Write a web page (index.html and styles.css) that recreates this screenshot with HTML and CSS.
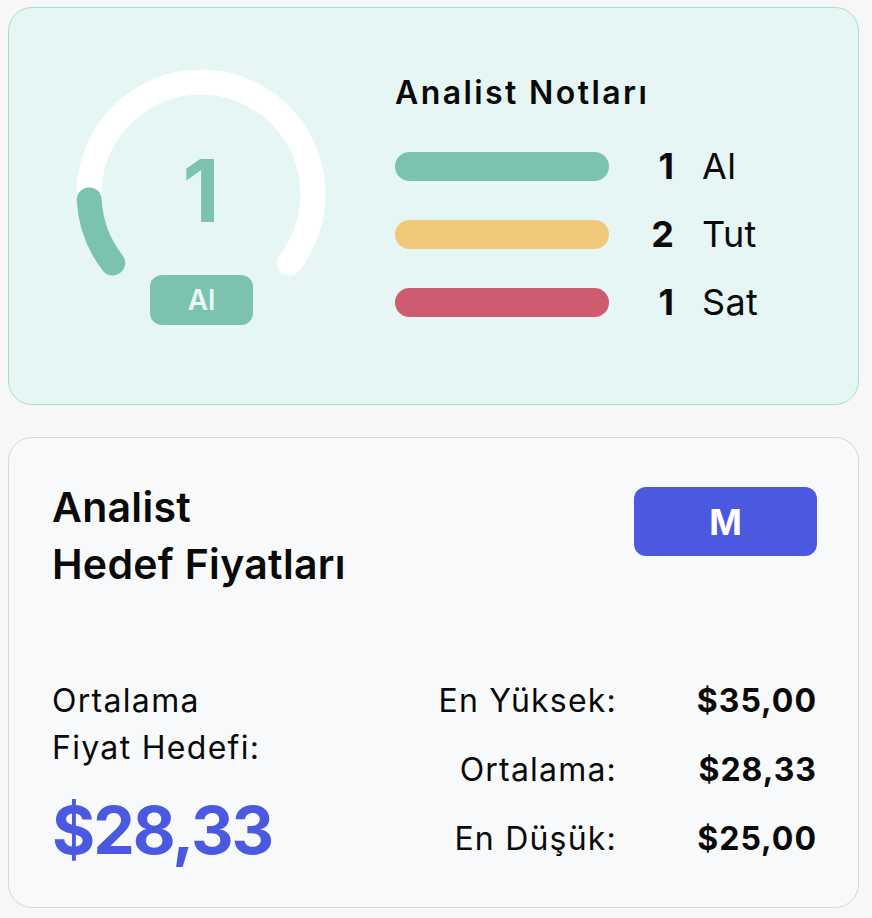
FILE: index.html
```html
<!DOCTYPE html>
<html lang="tr">
    <head>
        <meta charset="UTF-8" />
        <meta name="viewport" content="width=device-width, initial-scale=1.0" />
        <title>Analist Notları</title>
        <link rel="stylesheet" href="styles.css">
    </head>
    <body>
        <div id="contenedor">
            <section class="tarjeta notas">
                <div class="gauge">
                    <svg width="262" height="262" viewBox="0 0 262 262">
                        <path d="M 42.7 200 A 112 112 0 1 1 219.3 200" fill="none" stroke="#ffffff" stroke-width="25" stroke-linecap="round" />
                        <path d="M 42.7 200 A 112 112 0 0 1 19.2 136.9" fill="none" stroke="#7bc3ae" stroke-width="25" stroke-linecap="round" />
                    </svg>
                    <div class="gaugeNumero">1</div>
                    <div class="gaugeEtiqueta">Al</div>
                </div>
                <div class="resumen">
                    <h2>Analist Notları</h2>
                    <div class="fila">
                        <span class="barra verde"></span>
                        <span class="cuenta">1</span>
                        <span class="nombre">Al</span>
                    </div>
                    <div class="fila">
                        <span class="barra amarilla"></span>
                        <span class="cuenta">2</span>
                        <span class="nombre">Tut</span>
                    </div>
                    <div class="fila">
                        <span class="barra roja"></span>
                        <span class="cuenta">1</span>
                        <span class="nombre">Sat</span>
                    </div>
                </div>
            </section>
            <section class="tarjeta precios">
                <div class="cabecera">
                    <h2>Analist<br>Hedef Fiyatları</h2>
                    <button class="boton">M</button>
                </div>
                <div class="cuerpo">
                    <div class="media">
                        <p>Ortalama<br>Fiyat Hedefi:</p>
                        <div class="valorMedio">$28,33</div>
                    </div>
                    <div class="tabla">
                        <span class="etiqueta">En Yüksek:</span><span class="valor">$35,00</span>
                        <span class="etiqueta">Ortalama:</span><span class="valor">$28,33</span>
                        <span class="etiqueta">En Düşük:</span><span class="valor">$25,00</span>
                    </div>
                </div>
            </section>
        </div>
    </body>
</html>
```

FILE: styles.css
```css
*{
    margin: 0;
    padding: 0;
    box-sizing: border-box;
}
body{
    background-color: #f7f7f7;
    font-family: Inter, "Noto Sans", sans-serif;
    color: #0a0a0a;
}
#contenedor{
    width: 851px;
    margin: 7px 0 0 8px;
    display: flex;
    flex-direction: column;
    gap: 32px;
}
.tarjeta{
    border-radius: 24px;
}
.notas{
    height: 398px;
    display: flex;
    align-items: flex-start;
    padding: 55px 0 0 61px;
    background-color: #e6f6f4;
    border: 1px solid #a6dfd0;
}
.gauge{
    position: relative;
    width: 262px;
    height: 262px;
}
.gauge svg{
    display: block;
}
.gaugeNumero{
    position: absolute;
    top: 85px;
    left: 0;
    width: 100%;
    text-align: center;
    font-size: 86px;
    line-height: 1;
    font-weight: 700;
    color: #7bc3ae;
}
.gaugeEtiqueta{
    position: absolute;
    top: 212px;
    left: 80px;
    width: 103px;
    height: 50px;
    border-radius: 12px;
    background-color: #7bc3ae;
    color: #e9f7f4;
    font-size: 28px;
    font-weight: 600;
    line-height: 50px;
    text-align: center;
}
.resumen{
    margin: 11px 0 0 63px;
    display: flex;
    flex-direction: column;
    gap: 28px;
}
.resumen h2{
    font-size: 32px;
    font-weight: 600;
    line-height: 38px;
    letter-spacing: 2.4px;
    margin-bottom: 6px;
}
.fila{
    display: flex;
    align-items: center;
    height: 40px;
    font-size: 36px;
    line-height: 40px;
}
.barra{
    display: block;
    width: 214px;
    height: 29px;
    border-radius: 15px;
}
.verde{ background-color: #7bc3ae; }
.amarilla{ background-color: #f0c879; }
.roja{ background-color: #cf5b70; }
.cuenta{
    width: 65px;
    text-align: right;
    font-weight: 700;
}
.nombre{
    margin-left: 28px;
    letter-spacing: 0.3px;
}
.precios{
    padding: 41px 41px 34px 43px;
    background-color: #f8f9fb;
    border: 1px solid #d5d6dc;
}
.cabecera{
    display: flex;
    justify-content: space-between;
    align-items: flex-start;
}
.cabecera h2{
    font-size: 41px;
    font-weight: 600;
    line-height: 57px;
    letter-spacing: 0.3px;
}
.boton{
    margin-top: 8px;
    width: 183px;
    height: 69px;
    border: none;
    border-radius: 12px;
    background-color: #4b59e1;
    color: #ffffff;
    font-family: Inter, sans-serif;
    font-size: 35px;
    font-weight: 700;
}
.cuerpo{
    margin-top: 73px;
    display: flex;
    justify-content: space-between;
    align-items: center;
}
.media p{
    font-size: 32px;
    line-height: 47px;
    letter-spacing: 1.3px;
}
.valorMedio{
    margin-top: 26px;
    font-size: 66px;
    line-height: 1;
    font-weight: 700;
    letter-spacing: -2px;
    color: #4b59e1;
}
.tabla{
    display: grid;
    grid-template-columns: auto 200px;
    font-size: 32px;
    line-height: 69px;
}
.etiqueta{
    text-align: right;
    letter-spacing: 1.2px;
}
.valor{
    text-align: right;
    font-weight: 700;
    letter-spacing: 1px;
}
```
